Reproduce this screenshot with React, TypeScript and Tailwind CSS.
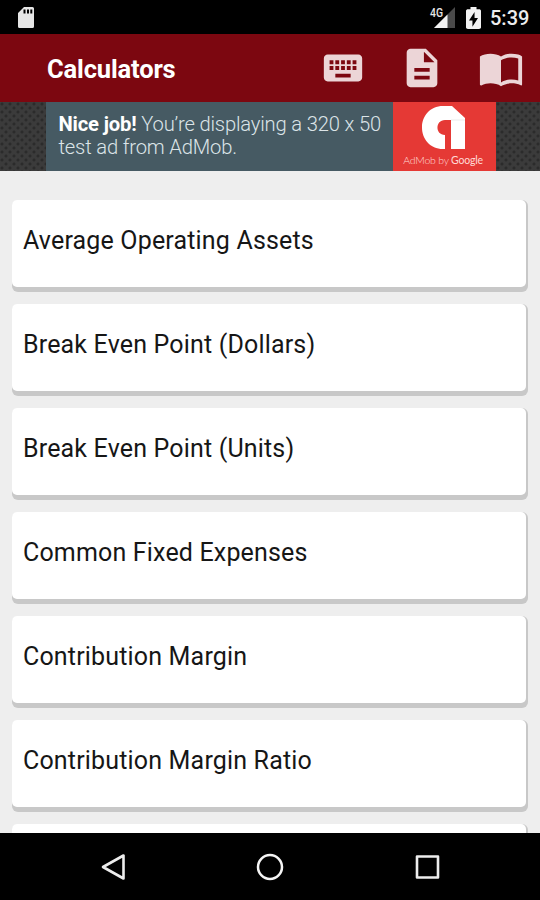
const calculators = [
    "Average Operating Assets",
    "Break Even Point (Dollars)",
    "Break Even Point (Units)",
    "Common Fixed Expenses",
    "Contribution Margin",
    "Contribution Margin Ratio",
    "",
]

const StatusBar = () => {
    return (
        <div className="flex h-[34px] shrink-0 items-center bg-black pl-[18px] pr-[11px]">
            <svg viewBox="0 0 16 21" className="mt-[1px] h-[21px] w-4" fill="#e6e6e6">
                <path fillRule="evenodd" d="M6 0h8.500q1.500 0 1.500 1.500v18q0 1.500-1.500 1.500h-13Q0 21 0 19.500V6zM5.500 2.500v4h2v-4zM9 2.500v4h2v-4zM12.300 2.500v4h2v-4z" />
            </svg>
            <svg viewBox="0 0 27 21" className="ml-auto mt-[1px] h-[21px] w-[27px]">
                <path d="M26 0v21H5z" fill="#4a4a4a" />
                <path d="M18.500 7.500V21H5z" fill="#f2f2f2" />
                <path d="M0 0h15v10.500H0z" fill="#000" />
                <text x="1" y="9.500" fontSize="12" fontWeight="500" fill="#e6e6e6" fontFamily="Roboto, sans-serif" textLength="13" lengthAdjust="spacingAndGlyphs">4G</text>
            </svg>
            <svg viewBox="7 2 10 20" preserveAspectRatio="none" className="ml-[10px] mt-[1px] h-[22px] w-[15px]" fill="#f2f2f2">
                <path d="M15.670 4H14V2h-4v2H8.330C7.600 4 7 4.600 7 5.330v15.330C7 21.400 7.600 22 8.330 22h7.330c.740 0 1.340-.600 1.340-1.330V5.330C17 4.600 16.400 4 15.670 4z" />
                <path d="M11.300 20v-5.800H9L12.700 6.500v5.500H15z" fill="#000" />
            </svg>
            <span className="ml-[9px] mt-[2px] w-[39px] text-[20px] leading-none font-medium text-[#ededed]">5:39</span>
        </div>
    )
}

const Header = () => {
    return (
        <header className="flex h-[68px] shrink-0 items-center bg-[#7c0710] pl-[47px] pr-4 text-[#ecd5d7]">
            <h1 className="mt-[3px] text-[25.500px] leading-none font-bold tracking-[-0.150px] text-white">Calculators</h1>
            <svg viewBox="0 0 24 24" className="ml-auto size-[46px]" fill="currentColor">
                <path d="M20 5H4c-1.100 0-1.990.900-1.990 2L2 17c0 1.100.900 2 2 2h16c1.100 0 2-.900 2-2V7c0-1.100-.900-2-2-2zm-9 3h2v2h-2V8zm0 3h2v2h-2v-2zM8 8h2v2H8V8zm0 3h2v2H8v-2zm-1 2H5v-2h2v2zm0-3H5V8h2v2zm9 7H8v-2h8v2zm0-4h-2v-2h2v2zm0-3h-2V8h2v2zm3 3h-2v-2h2v2zm0-3h-2V8h2v2z" />
            </svg>
            <svg viewBox="0 0 24 24" className="ml-[33px] size-[46px]" fill="currentColor">
                <path d="M14 2H6c-1.100 0-1.990.900-1.990 2L4 20c0 1.100.890 2 1.990 2H18c1.100 0 2-.900 2-2V8l-6-6zm2 16H8v-2h8v2zm0-4H8v-2h8v2zm-3-5V3.500L18.500 9H13z" />
            </svg>
            <svg viewBox="0 0 24 24" className="ml-[33px] size-[46px]" fill="currentColor">
                <path d="M21 5c-1.110-.350-2.330-.500-3.500-.500-1.950 0-4.050.400-5.500 1.500-1.450-1.100-3.550-1.500-5.500-1.500S2.450 4.900 1 6v14.650c0 .250.250.500.500.500.100 0 .150-.050.250-.050C3.100 20.450 5.050 20 6.500 20c1.950 0 4.050.400 5.500 1.500 1.350-.850 3.800-1.500 5.500-1.500 1.650 0 3.350.300 4.750 1.050.100.050.150.050.250.050.250 0 .500-.250.500-.500V6c-.600-.450-1.250-.750-2-1zm0 13.500c-1.100-.350-2.300-.500-3.500-.500-1.700 0-4.150.650-5.500 1.500V8c1.350-.850 3.800-1.500 5.500-1.500 1.200 0 2.400.150 3.500.500v11.500z" />
            </svg>
        </header>
    )
}

const AdBanner = () => {
    return (
        <div className="flex h-[69px] shrink-0 justify-center bg-[#3b3b3b] bg-[radial-gradient(circle_at_25%_25%,#2b2b2b_1.200px,transparent_1.800px),radial-gradient(circle_at_75%_75%,#2b2b2b_1.200px,transparent_1.800px)] bg-size-[8px_8px] pr-px pl-[2px]">
            <div className="w-[347px] bg-[#465a63] pt-[11px] pl-[13px] text-[20.200px] leading-[23px] font-light tracking-[-0.170px] whitespace-nowrap text-[#dce4e8]">
                <p><b className="font-bold text-white">Nice job!</b> You’re displaying a 320 x 50</p>
                <p>test ad from AdMob.</p>
            </div>
            <div className="flex w-[103px] flex-col items-center bg-[#e53935] pr-[2px]">
                <svg viewBox="0 0 43 43" className="mt-[4px] h-[43px] w-[43px]">
                    <path d="M21 0h9l13 12v31H29V14h-6c-10 0-10 15 0 15v14h-2C8 43 0 33 0 21.500S8 0 21 0z" fill="#fff" />
                    <path d="M29 14h14" stroke="#ddd" strokeWidth=".6" />
                </svg>
                <span className="mt-[6px] text-[10.500px] leading-none font-light tracking-[-0.220px] whitespace-nowrap text-[#ffd9d7] font-[Lato,sans-serif]">AdMob by <span className="font-normal">Google</span></span>
            </div>
        </div>
    )
}

interface ICalculatorCard {
    name: string
}

const CalculatorCard = ({ name }: ICalculatorCard) => {
    return (
        <li className="h-[92px] shrink-0 rounded-[6px] bg-[#c8c8c8] pr-[2px] pb-[5px]">
            <div className="flex h-full items-center rounded-[5px] bg-white pl-[11px] text-[25px] tracking-[0.170px] whitespace-nowrap text-[#161616]">
                <span className="-mt-[6px]">{name}</span>
            </div>
        </li>
    )
}

const NavBar = () => {
    return (
        <nav className="flex h-[67px] shrink-0 items-center justify-between bg-black px-[98px]">
            <svg viewBox="0 0 30 30" className="size-[30px]" fill="none" stroke="#ededed" strokeWidth="2.6" strokeLinejoin="round">
                <path d="M25.500 3.500v23L5 15z" />
            </svg>
            <svg viewBox="0 0 30 30" className="size-[30px]" fill="none" stroke="#f5f5f5" strokeWidth="2.500">
                <circle cx="15" cy="15" r="12" />
            </svg>
            <svg viewBox="0 0 30 30" className="size-[30px]" fill="none" stroke="#ededed" strokeWidth="2.600" strokeLinejoin="round">
                <path d="M5 4.500h21v21H5z" />
            </svg>
        </nav>
    )
}

const App = () => {
    return (
        <div className="flex h-[900px] w-[540px] flex-col overflow-hidden bg-[#eeeeee] font-[Roboto,sans-serif]">
            <StatusBar />
            <Header />
            <AdBanner />
            <ul className="flex min-h-0 flex-1 flex-col gap-3 overflow-hidden pt-[29px] pr-3 pl-3">
                {calculators.map((name, index) => (
                    <CalculatorCard key={index} name={name} />
                ))}
            </ul>
            <NavBar />
        </div>
    )
}

export default App
